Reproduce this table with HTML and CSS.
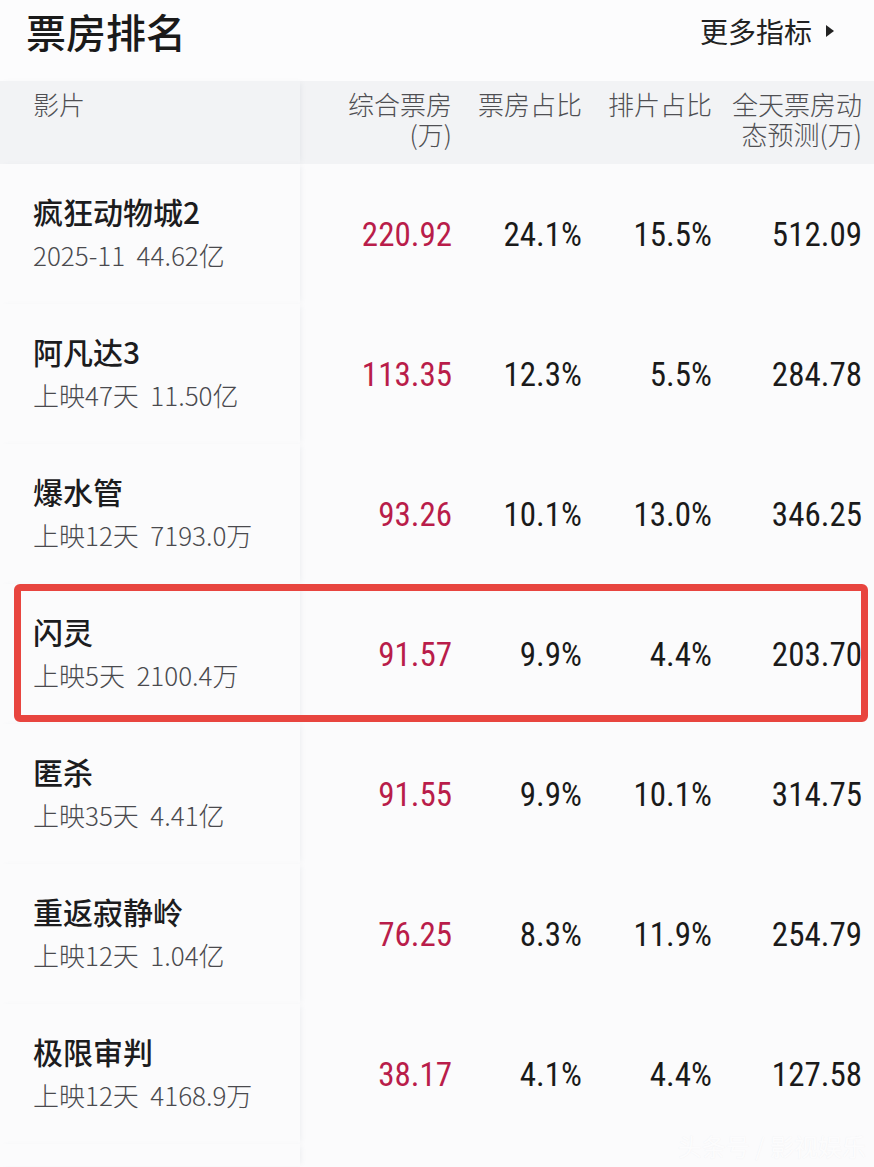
FILE: index.html
```html
<!DOCTYPE html>
<html lang="zh-CN">
<head>
<meta charset="utf-8">
<title>票房排名</title>
<link rel="stylesheet" href="styles.css">
</head>
<body>
<div class="page">
  <header class="top">
    <h1 class="heading">票房排名</h1>
    <div class="more">更多指标<span class="tri"></span></div>
  </header>
  <div class="table">
    <div class="row head">
      <div class="cell name">影片</div>
      <div class="cell num">综合票房<br>(万)</div>
      <div class="cell num">票房占比</div>
      <div class="cell num">排片占比</div>
      <div class="cell num">全天票房动<br>态预测(万)</div>
    </div>
    <div class="row">
      <div class="cell name"><div class="title">疯狂动物城2</div><div class="sub">2025-11&nbsp;&nbsp;44.62亿</div></div>
      <div class="cell num red">220.92</div>
      <div class="cell num">24.1%</div>
      <div class="cell num">15.5%</div>
      <div class="cell num">512.09</div>
    </div>
    <div class="row">
      <div class="cell name"><div class="title">阿凡达3</div><div class="sub">上映47天&nbsp;&nbsp;11.50亿</div></div>
      <div class="cell num red">113.35</div>
      <div class="cell num">12.3%</div>
      <div class="cell num">5.5%</div>
      <div class="cell num">284.78</div>
    </div>
    <div class="row">
      <div class="cell name"><div class="title">爆水管</div><div class="sub">上映12天&nbsp;&nbsp;7193.0万</div></div>
      <div class="cell num red">93.26</div>
      <div class="cell num">10.1%</div>
      <div class="cell num">13.0%</div>
      <div class="cell num">346.25</div>
    </div>
    <div class="row hl">
      <div class="cell name"><div class="title">闪灵</div><div class="sub">上映5天&nbsp;&nbsp;2100.4万</div></div>
      <div class="cell num red">91.57</div>
      <div class="cell num">9.9%</div>
      <div class="cell num">4.4%</div>
      <div class="cell num">203.70</div>
    </div>
    <div class="row">
      <div class="cell name"><div class="title">匿杀</div><div class="sub">上映35天&nbsp;&nbsp;4.41亿</div></div>
      <div class="cell num red">91.55</div>
      <div class="cell num">9.9%</div>
      <div class="cell num">10.1%</div>
      <div class="cell num">314.75</div>
    </div>
    <div class="row">
      <div class="cell name"><div class="title">重返寂静岭</div><div class="sub">上映12天&nbsp;&nbsp;1.04亿</div></div>
      <div class="cell num red">76.25</div>
      <div class="cell num">8.3%</div>
      <div class="cell num">11.9%</div>
      <div class="cell num">254.79</div>
    </div>
    <div class="row">
      <div class="cell name"><div class="title">极限审判</div><div class="sub">上映12天&nbsp;&nbsp;4168.9万</div></div>
      <div class="cell num red">38.17</div>
      <div class="cell num">4.1%</div>
      <div class="cell num">4.4%</div>
      <div class="cell num">127.58</div>
    </div>
    <div class="row tail">
      <div class="cell name"></div>
      <div class="cell"></div>
      <div class="cell"></div>
      <div class="cell"></div>
      <div class="cell"></div>
    </div>
  </div>
  <div class="watermark">头条号 / 影视娱乐</div>
</div>
</body>
</html>
```

FILE: styles.css
```css
* { box-sizing: border-box; }
html, body {
  margin: 0;
  padding: 0;
  background: #fbfbfc;
}
body {
  font-family: "Noto Sans CJK SC", "Noto Sans", sans-serif;
  color: #1c1c1e;
  width: 874px;
  height: 1167px;
  overflow: hidden;
}
.page {
  position: relative;
  width: 874px;
  height: 1167px;
}
.top {
  height: 81px;
  display: flex;
  justify-content: space-between;
  align-items: flex-start;
  padding: 8px 40px 0 26px;
  background: #fcfcfd;
}
.heading {
  margin: 0;
  font-size: 40px;
  line-height: 46px;
  font-weight: 500;
  color: #1a1a1a;
}
.more {
  display: flex;
  align-items: center;
  font-size: 28px;
  line-height: 46px;
  color: #222;
  gap: 14px;
}
.tri {
  width: 0;
  height: 0;
  border-top: 6px solid transparent;
  border-bottom: 6px solid transparent;
  border-left: 8px solid #222;
}
.table {
  display: flex;
  flex-direction: column;
}
.row {
  display: grid;
  grid-template-columns: 300px 160px 130px 130px 154px;
  height: 140px;
  align-items: stretch;
}
.cell {
  display: flex;
  align-items: center;
  justify-content: flex-end;
  padding-right: 8px;
}
.cell.name {
  flex-direction: column;
  align-items: flex-start;
  justify-content: center;
  padding: 0 0 6px 33px;
  position: relative;
  z-index: 1;
  box-shadow: 3px 0 5px -2px rgba(120, 130, 150, 0.10);
  background: #fbfbfc;
}
.row .cell:last-child { padding-right: 12px; }
.title {
  font-size: 30px;
  line-height: 40px;
  font-weight: 500;
  color: #1c1c1e;
}
.sub {
  margin-top: 8px;
  font-size: 26px;
  line-height: 32px;
  color: #4a4a4e;
  font-weight: 300;
  font-family: "Noto Sans CJK SC", sans-serif;
}
.num {
  font-family: "Liberation Sans Narrow", "Roboto Condensed", "Liberation Sans", sans-serif;
  font-size: 33px;
  color: #1a1a1a;
  text-align: right;
}
.num.red { color: #b91d4a; }
.head {
  height: 83px;
  background: #f2f3f5;
}
.head .cell {
  align-items: flex-start;
  padding-top: 8px;
  font-family: "Noto Sans CJK SC", sans-serif;
  font-size: 26px;
  line-height: 30px;
  font-weight: 300;
  color: #4f4f53;
  text-align: right;
  white-space: nowrap;
}
.head .cell.name {
  justify-content: flex-start;
  padding: 8px 0 0 33px;
  background: #f2f3f5;
}
.tail { height: 22px; }
.hl { position: relative; }
.hl::after {
  content: "";
  position: absolute;
  left: 14px;
  right: 6px;
  top: 0;
  bottom: 2px;
  border: 7px solid #e8453f;
  border-radius: 6px;
  z-index: 2;
  pointer-events: none;
}
.watermark {
  position: absolute;
  right: 8px;
  bottom: 4px;
  font-size: 24px;
  color: rgba(255, 255, 255, 0.85);
  text-shadow: 0 0 1px rgba(230, 230, 235, 0.6);
}
```
